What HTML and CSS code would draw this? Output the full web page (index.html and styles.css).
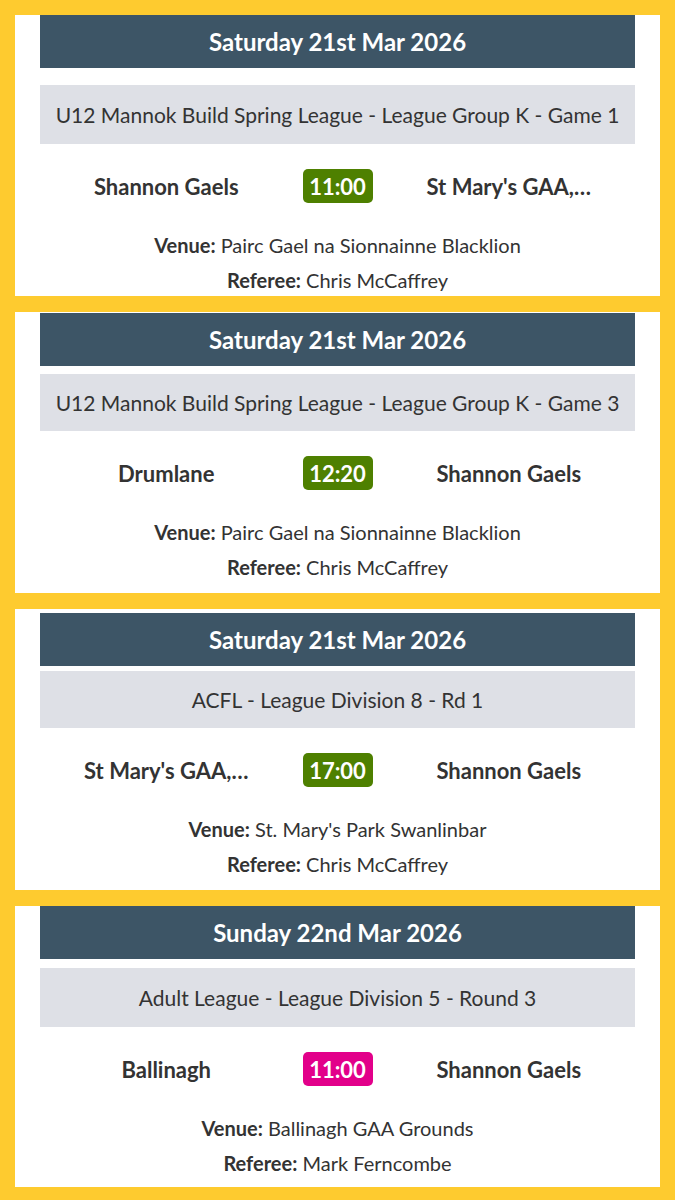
FILE: index.html
```html
<!DOCTYPE html>
<html>
<head>
<meta charset="utf-8">
<link rel="stylesheet" href="styles.css">
</head>
<body>
<div class="page">
  <section class="card c1">
    <div class="date">Saturday 21st Mar 2026</div>
    <div class="league">U12 Mannok Build Spring League - League Group K - Game 1</div>
    <div class="teams">
      <div class="team">Shannon Gaels</div>
      <div class="time green">11:00</div>
      <div class="team">St Mary's GAA,…</div>
    </div>
    <div class="info"><b>Venue:</b> Pairc Gael na Sionnainne Blacklion</div>
    <div class="info"><b>Referee:</b> Chris McCaffrey</div>
  </section>
  <section class="card c2">
    <div class="date">Saturday 21st Mar 2026</div>
    <div class="league">U12 Mannok Build Spring League - League Group K - Game 3</div>
    <div class="teams">
      <div class="team">Drumlane</div>
      <div class="time green">12:20</div>
      <div class="team">Shannon Gaels</div>
    </div>
    <div class="info"><b>Venue:</b> Pairc Gael na Sionnainne Blacklion</div>
    <div class="info"><b>Referee:</b> Chris McCaffrey</div>
  </section>
  <section class="card c3">
    <div class="date">Saturday 21st Mar 2026</div>
    <div class="league">ACFL - League Division 8 - Rd 1</div>
    <div class="teams">
      <div class="team">St Mary's GAA,…</div>
      <div class="time green">17:00</div>
      <div class="team">Shannon Gaels</div>
    </div>
    <div class="info"><b>Venue:</b> St. Mary's Park Swanlinbar</div>
    <div class="info"><b>Referee:</b> Chris McCaffrey</div>
  </section>
  <section class="card c4">
    <div class="date">Sunday 22nd Mar 2026</div>
    <div class="league">Adult League - League Division 5 - Round 3</div>
    <div class="teams">
      <div class="team">Ballinagh</div>
      <div class="time pink">11:00</div>
      <div class="team">Shannon Gaels</div>
    </div>
    <div class="info"><b>Venue:</b> Ballinagh GAA Grounds</div>
    <div class="info"><b>Referee:</b> Mark Ferncombe</div>
  </section>
</div>
</body>
</html>
```

FILE: styles.css
```css
* { box-sizing: border-box; }
html, body {
  margin: 0;
  padding: 0;
  background: #fecb2f;
}
body {
  font-family: "Lato", "Noto Sans", sans-serif;
  color: #333333;
}
.page {
  display: flex;
  flex-direction: column;
  gap: 16px;
  padding: 15px 15px 0;
  height: 1200px;
}
.card {
  background: #ffffff;
  height: 281px;
  padding: 0 25px;
  overflow: hidden;
  display: flex;
  flex-direction: column;
}
.date {
  background: #3d5566;
  color: #ffffff;
  font-weight: 700;
  font-size: 24px;
  height: 53px;
  display: flex;
  align-items: center;
  justify-content: center;
  flex-shrink: 0;
}
.league {
  background: #dee0e6;
  height: 59px;
  display: flex;
  align-items: center;
  justify-content: center;
  font-size: 21px;
  flex-shrink: 0;
  white-space: nowrap;
}
.c1 .league { margin-top: 17px; }
.c2 .date { margin-top: 1px; }
.c2 .league { margin-top: 8px; height: 57px; }
.c3 .date { margin-top: 4px; }
.c3 .league { margin-top: 5px; height: 57px; }
.c4 .league { margin-top: 9px; }
.teams {
  display: grid;
  grid-template-columns: 1fr 70px 1fr;
  column-gap: 10px;
  align-items: center;
  margin-top: 25px;
  flex-shrink: 0;
}
.team {
  text-align: center;
  font-weight: 700;
  font-size: 22px;
  white-space: nowrap;
}
.time {
  height: 34px;
  border-radius: 5px;
  color: #ffffff;
  font-weight: 700;
  font-size: 22px;
  display: flex;
  align-items: center;
  justify-content: center;
}
.green { background: #4e8000; }
.pink { background: #e2008a; }
.info {
  text-align: center;
  font-size: 20px;
  line-height: 35px;
  flex-shrink: 0;
}
.teams + .info { margin-top: 25px; }
.info b { font-weight: 700; }
```
